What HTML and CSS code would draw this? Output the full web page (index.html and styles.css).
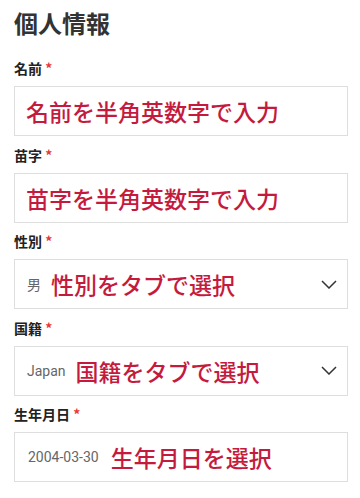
FILE: index.html
```html
<!DOCTYPE html>
<html lang="ja">
<head>
<meta charset="utf-8">
<link rel="stylesheet" href="styles.css">
</head>
<body>
<div class="page">
  <h1 class="title">個人情報</h1>

  <div class="field">
    <div class="label">名前 <span class="req">*</span></div>
    <div class="box"><span class="note">名前を半角英数字で入力</span></div>
  </div>

  <div class="field">
    <div class="label">苗字 <span class="req">*</span></div>
    <div class="box"><span class="note">苗字を半角英数字で入力</span></div>
  </div>

  <div class="field">
    <div class="label">性別 <span class="req">*</span></div>
    <div class="box select">
      <span class="value">男</span>
      <span class="note">性別をタブで選択</span>
      <svg class="chev" width="16" height="9" viewBox="0 0 16 9"><path d="M1 1 L8 8 L15 1" fill="none" stroke="#333" stroke-width="1.5"/></svg>
    </div>
  </div>

  <div class="field">
    <div class="label">国籍 <span class="req">*</span></div>
    <div class="box select">
      <span class="value latin">Japan</span>
      <span class="note">国籍をタブで選択</span>
      <svg class="chev" width="16" height="9" viewBox="0 0 16 9"><path d="M1 1 L8 8 L15 1" fill="none" stroke="#333" stroke-width="1.5"/></svg>
    </div>
  </div>

  <div class="field">
    <div class="label">生年月日 <span class="req">*</span></div>
    <div class="box">
      <span class="value latin date">2004-03-30</span>
      <span class="note">生年月日を選択</span>
    </div>
  </div>
</div>
</body>
</html>
```

FILE: styles.css
```css
html, body {
  margin: 0;
  padding: 0;
  background: #ffffff;
}
body {
  font-family: "Noto Sans CJK JP", "Noto Sans", sans-serif;
  color: #222;
}
.page {
  padding: 7px 12px 0 14px;
}
.title {
  margin: 0 0 19px 0;
  font-size: 24px;
  line-height: 32px;
  font-weight: 700;
  color: #333;
}
.field {
  margin-bottom: 8.5px;
}
.label {
  font-size: 14px;
  line-height: 20px;
  font-weight: 700;
  color: #222;
  margin-bottom: 8px;
}
.req {
  color: #e53935;
  font-weight: 700;
}
.box {
  height: 50px;
  box-sizing: border-box;
  border: 1px solid #dedede;
  display: flex;
  align-items: center;
  gap: 10px;
  padding: 0 10px 0 11px;
}
.note {
  font-size: 23px;
  line-height: 30px;
  font-weight: 500;
  color: #c41a3e;
  white-space: nowrap;
}
.value {
  font-size: 14px;
  color: #666;
  padding-left: 1px;
}
.latin {
  font-family: Roboto, "Noto Sans", sans-serif;
}
.date {
  padding-left: 2px;
  margin-right: 2px;
}
.chev {
  margin-left: auto;
  display: block;
}
```
